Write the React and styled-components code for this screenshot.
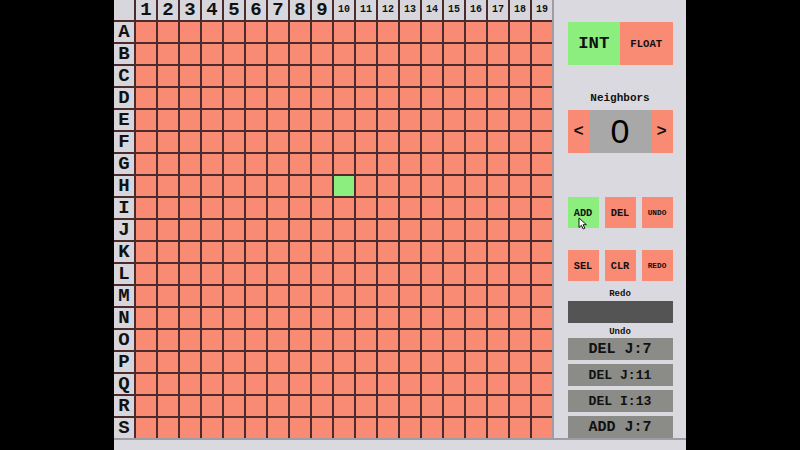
import React from "react"
import styled, { createGlobalStyle } from "styled-components"

const ROWS = "ABCDEFGHIJKLMNOPQRS".split("")
const COLS = Array.from({ length: 19 }, (_, i) => i + 1)
const ACTIVE = { row: 7, col: 10 }

const undoList = ["DEL J:7", "DEL J:11", "DEL I:13", "ADD J:7"]

// text is shrunk to fit the box: width / number of letters
const fit = (text, width) => Math.min(width / text.length, 22)

const GlobalStyle = createGlobalStyle`
	html, body {
		margin: 0;
		padding: 0;
		background: #000;
	}
	body {
		font-family: "Liberation Mono", "Courier New", monospace;
	}
`

function App() {
	return (
		<>
			<GlobalStyle />
			<Frame>
				<Main>
					<Board>
						<HeadCell />
						{COLS.map((c) => (
							<HeadCell key={c} $size={c < 10 ? 19 : 10}>
								{c}
							</HeadCell>
						))}
						{ROWS.map((r, ri) => (
							<React.Fragment key={r}>
								<HeadCell $size={19}>{r}</HeadCell>
								{COLS.map((c) => (
									<Cell
										key={c}
										$on={ri === ACTIVE.row && c === ACTIVE.col}
									/>
								))}
							</React.Fragment>
						))}
					</Board>

					<Panel>
						<Toggle>
							<ToggleHalf $on $size={fit("INT", 52)}>
								INT
							</ToggleHalf>
							<ToggleHalf $size={fit("FLOAT", 53)}>FLOAT</ToggleHalf>
						</Toggle>

						<Label $size={11} $top={27}>
							Neighbors
						</Label>
						<Spinner>
							<Arrow>&lt;</Arrow>
							<Count>0</Count>
							<Arrow>&gt;</Arrow>
						</Spinner>

						<ButtonGrid $top={44}>
							<Square $on $size={fit("ADD", 31)}>
								ADD
								<Pointer viewBox="0 0 10 13" width="10" height="13">
									<path
										d="M1 1 L1 10.5 L3.4 8.3 L5.2 12 L6.8 11.3 L5.1 7.7 L8.4 7.7 Z"
										fill="#fff"
										stroke="#000"
										strokeWidth="0.9"
										strokeLinejoin="round"
									/>
								</Pointer>
							</Square>
							<Square $size={fit("DEL", 31)}>DEL</Square>
							<Square $size={fit("UNDO", 31)}>UNDO</Square>
						</ButtonGrid>
						<ButtonGrid $top={22}>
							<Square $size={fit("SEL", 31)}>SEL</Square>
							<Square $size={fit("CLR", 31)}>CLR</Square>
							<Square $size={fit("REDO", 31)}>REDO</Square>
						</ButtonGrid>

						<Label $size={9} $top={8}>
							Redo
						</Label>
						<RedoBar />

						<Label $size={9} $top={4}>
							Undo
						</Label>
						<UndoList>
							{undoList.map((u, i) => (
								<UndoItem key={i} $size={fit(u, 105)}>
									{u}
								</UndoItem>
							))}
						</UndoList>
					</Panel>
				</Main>
			</Frame>
		</>
	)
}

export default App

const Frame = styled.div`
	width: 572px;
	height: 450px;
	margin: 0 auto;
	background: #d9d9df;
	overflow: hidden;
`

const Main = styled.div`
	display: flex;
	height: 438px;
	border-bottom: 2px solid #9d9da5;
`

const Board = styled.div`
	display: grid;
	grid-template-columns: repeat(20, 20px);
	grid-template-rows: repeat(20, 20px);
	gap: 2px;
	background: #4b2b2b;
	border-right: 2px solid #9d9da5;
`

const HeadCell = styled.div`
	display: flex;
	align-items: center;
	justify-content: center;
	background: #d6d6dc;
	color: #111;
	font-weight: bold;
	font-size: ${(p) => p.$size || 10}px;
	line-height: 20px;
`

const Cell = styled.div`
	background: ${(p) => (p.$on ? "#8cee7e" : "#f98a74")};
`

const Panel = styled.div`
	flex: 1;
	display: flex;
	flex-direction: column;
	align-items: center;
	padding-top: 22px;
`

const Toggle = styled.div`
	display: flex;
	width: 105px;
	height: 43px;
`

const ToggleHalf = styled.div`
	flex: 1;
	display: flex;
	align-items: center;
	justify-content: center;
	background: ${(p) => (p.$on ? "#8cee7e" : "#f98a74")};
	font-weight: bold;
	font-size: ${(p) => p.$size}px;
	color: #111;
`

const Label = styled.div`
	margin-top: ${(p) => p.$top}px;
	font-weight: bold;
	font-size: ${(p) => p.$size}px;
	line-height: ${(p) => p.$size + 1}px;
	color: #111;
	height: ${(p) => p.$size + 1}px;
`

const Spinner = styled.div`
	display: grid;
	grid-template-columns: 22px 1fr 22px;
	width: 105px;
	height: 43px;
	margin-top: 6px;
`

const Arrow = styled.div`
	display: flex;
	align-items: center;
	justify-content: center;
	background: #f98a74;
	font-weight: bold;
	font-size: 17px;
	color: #111;
`

const Count = styled.div`
	display: flex;
	align-items: center;
	justify-content: center;
	background: #a8a8a8;
	font-family: "Liberation Sans", Arial, sans-serif;
	font-size: 34px;
	color: #000;
`

const ButtonGrid = styled.div`
	display: flex;
	gap: 6px;
	width: 105px;
	margin-top: ${(p) => p.$top}px;
`

const Square = styled.div`
	position: relative;
	width: 31px;
	height: 31px;
	display: flex;
	align-items: center;
	justify-content: center;
	background: ${(p) => (p.$on ? "#8cee7e" : "#f98a74")};
	font-weight: bold;
	font-size: ${(p) => p.$size}px;
	color: #111;
`

const Pointer = styled.svg`
	position: absolute;
	left: 10px;
	top: 20px;
`

const RedoBar = styled.div`
	width: 105px;
	height: 22px;
	margin-top: 2px;
	background: #545454;
`

const UndoList = styled.div`
	display: flex;
	flex-direction: column;
	gap: 4px;
	width: 105px;
	margin-top: 1px;
`

const UndoItem = styled.div`
	height: 22px;
	display: flex;
	align-items: center;
	justify-content: center;
	background: #8b8b88;
	font-weight: bold;
	font-size: ${(p) => p.$size}px;
	color: #111;
`
